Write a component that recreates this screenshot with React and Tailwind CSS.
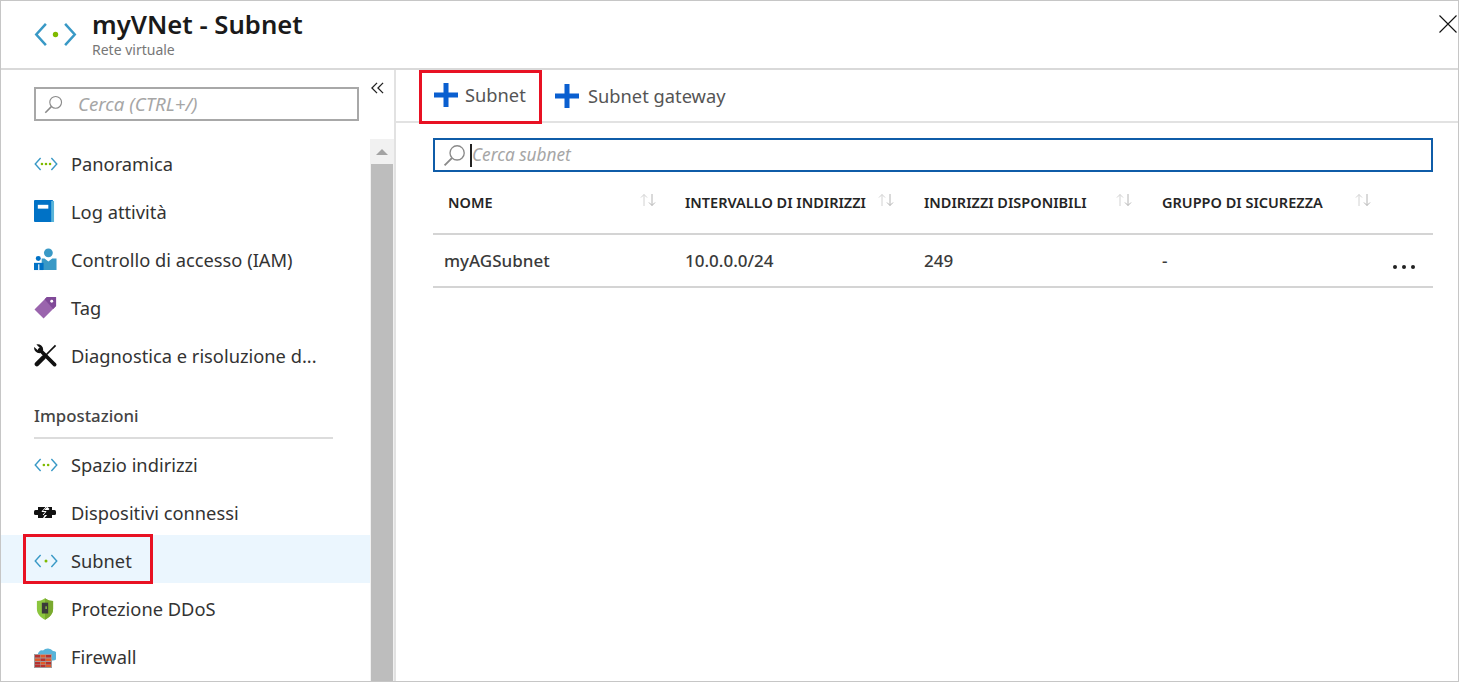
const VNetIcon = ({ dots = 1, className }) => (
  <svg viewBox="0 0 44 26" className={className} fill="none">
    <path d="M12 2 L2 13 L12 24" stroke="#3999c6" strokeWidth="2.6" />
    <path d="M32 2 L42 13 L32 24" stroke="#3999c6" strokeWidth="2.6" />
    {dots === 1 && <circle cx="22" cy="13" r="2.8" fill="#7fba00" />}
    {dots === 2 && (
      <>
        <circle cx="18" cy="13" r="2.4" fill="#7fba00" />
        <circle cx="26" cy="13" r="2.4" fill="#7fba00" />
      </>
    )}
    {dots === 3 && (
      <>
        <circle cx="14.5" cy="13" r="2.4" fill="#7fba00" />
        <circle cx="22" cy="13" r="2.4" fill="#7fba00" />
        <circle cx="29.5" cy="13" r="2.4" fill="#7fba00" />
      </>
    )}
  </svg>
);

const BookIcon = () => (
  <svg viewBox="0 0 22 24" className="w-[21px] h-[23px]">
    <rect x="0" y="0" width="20" height="23" rx="1" fill="#0072c6" />
    <rect x="18" y="1" width="3" height="22" fill="#59b4d9" />
    <rect x="4" y="5" width="11" height="4" fill="#fff" />
  </svg>
);

const PeopleIcon = () => (
  <svg viewBox="0 0 24 24" className="w-[23px] h-[23px]">
    <circle cx="15" cy="5" r="4.6" fill="#3999c6" />
    <path d="M8 23 V11 H11 L15 14 L19 11 H23.5 V23 Z" fill="#3999c6" />
    <circle cx="4.5" cy="11" r="2.6" fill="#0072c6" />
    <path d="M0 23 V15.5 H10 V23 Z" fill="#0072c6" />
    <rect x="4.4" y="17" width="1.2" height="6" fill="#fff" />
  </svg>
);

const TagIcon = () => (
  <svg viewBox="0 0 24 24" className="w-[23px] h-[23px]">
    <path d="M0.5 14 L13.5 1 L23 1 L23 10.5 L10 23.5 Z" fill="#9a64ad" />
    <path d="M11 3.5 L13.5 1 L23 1 L23 10.5 L20 13.5 Z" fill="#804998" />
    <circle cx="18.5" cy="5.5" r="1.5" fill="#fff" />
  </svg>
);

const ToolsIcon = () => (
  <svg viewBox="0 0 24 24" className="w-[23px] h-[23px]">
    <path d="M6 6 L21.5 21.5" stroke="#111" strokeWidth="3.8" strokeLinecap="round" />
    <path d="M9.5 6.5 A5.6 5.6 0 0 0 2.5 0.5 L6 4 L4 6.5 L0.2 3 A5.6 5.6 0 0 0 6.5 9.5 Z" fill="#111" />
    <path d="M22.5 1.5 L12 12" stroke="#111" strokeWidth="1.8" />
    <path d="M10 14 L3 21" stroke="#111" strokeWidth="4.6" strokeLinecap="round" />
  </svg>
);

const PlugIcon = () => (
  <svg viewBox="0 0 22 13" className="w-[22px] h-[13px]">
    <rect x="0" y="4" width="22" height="5" rx="1.5" fill="#111" />
    <path d="M4 1 H13 L9 5.5 H13 L9 12 H4 Z" fill="#111" />
    <path d="M18 1 H13.5 L15.5 3 L11 8 H14 L10.5 12 H18 Z" fill="#111" />
    <path d="M12.5 0.5 L8 5.5 H12 L9 9" stroke="#fff" strokeWidth="1" fill="none" />
  </svg>
);

const ShieldIcon = () => (
  <svg viewBox="0 0 20 24" className="w-[18px] h-[22px] ml-[2px]">
    <path d="M10 0 C13 2.5 16 3 19 3 V12 C19 18 14 22 10 24 C6 22 1 18 1 12 V3 C4 3 7 2.5 10 0 Z" fill="#8cc63f" />
    <path d="M10 0 C13 2.5 16 3 19 3 V12 C19 18 14 22 10 24 Z" fill="#7aa92f" />
    <rect x="6.5" y="5" width="7" height="12" fill="#3a3a3a" />
    <rect x="10.5" y="9" width="1.5" height="3" fill="#8cc63f" />
  </svg>
);

const FirewallIcon = () => (
  <svg viewBox="0 0 22 23" className="w-[22px] h-[23px]">
    <path d="M4 10 A4 4 0 0 1 9 5.5 A6.5 6.5 0 0 1 19 6 A4.4 4.4 0 0 1 19 15.5 H4 Z" fill="#59b4d9" />
    <rect x="0" y="9" width="18" height="14" fill="#a39a9a" />
    <g fill="#b8312f">
      <rect x="1" y="10" width="5" height="2.5" />
      <rect x="12" y="10" width="5" height="2.5" />
      <rect x="6.5" y="13.5" width="5" height="2.5" />
      <rect x="1" y="17" width="5" height="2.5" />
      <rect x="12" y="17" width="5" height="2.5" />
      <rect x="1" y="20" width="5" height="2" />
      <rect x="6.5" y="20" width="5" height="2" />
    </g>
    <g fill="#e25a28">
      <rect x="6.5" y="10" width="5" height="2.5" />
      <rect x="1" y="13.5" width="5" height="2.5" />
      <rect x="12" y="13.5" width="5" height="2.5" />
      <rect x="6.5" y="17" width="5" height="2.5" />
      <rect x="12" y="20" width="5" height="2" />
    </g>
  </svg>
);

const SearchIcon = ({ className }) => (
  <svg viewBox="0 0 22 22" className={className} fill="none" stroke="#8a8a8a" strokeWidth="1.3">
    <circle cx="13.5" cy="8.5" r="6.8" />
    <path d="M8.5 13.5 L1.5 20.5" strokeWidth="1.8" />
  </svg>
);

const SortIcon = () => (
  <svg viewBox="0 0 16 14" className="w-4 h-3.5 shrink-0" fill="none" strokeWidth="1">
    <path d="M4 13 V1.5 M1 4.5 L4 1.5 L7 4.5" stroke="#d2d2d2" />
    <path d="M12 1 V12.5 M9 9.5 L12 12.5 L15 9.5" stroke="#b4b4b4" />
  </svg>
);

const PlusIcon = () => (
  <svg viewBox="0 0 24 24" className="w-6 h-6 shrink-0">
    <path d="M9.5 0 H14.5 V9.5 H24 V14.5 H14.5 V24 H9.5 V14.5 H0 V9.5 H9.5 Z" fill="#0a5fd0" />
  </svg>
);

const NavItem = ({ icon, label, active }) => (
  <div className={`flex items-center h-12 pt-[3px] pl-[33px] ${active ? "bg-[#ebf6fe]" : ""}`}>
    <span className="w-[37px] flex items-center shrink-0">{icon}</span>
    <span className="text-[18.3px] text-[#333]">{label}</span>
  </div>
);

const TOP_ITEMS = [
  { label: "Panoramica", icon: <VNetIcon dots={3} className="w-6 h-[14px]" /> },
  { label: "Log attività", icon: <BookIcon /> },
  { label: "Controllo di accesso (IAM)", icon: <PeopleIcon /> },
  { label: "Tag", icon: <TagIcon /> },
  { label: "Diagnostica e risoluzione d...", icon: <ToolsIcon /> },
];

const SETTINGS_ITEMS = [
  { label: "Spazio indirizzi", icon: <VNetIcon dots={2} className="w-6 h-[14px]" /> },
  { label: "Dispositivi connessi", icon: <PlugIcon /> },
  { label: "Subnet", icon: <VNetIcon className="w-6 h-[14px]" />, active: true },
  { label: "Protezione DDoS", icon: <ShieldIcon /> },
  { label: "Firewall", icon: <FirewallIcon /> },
];

const COLUMNS = [
  { label: "NOME", textWidth: "w-[196px] pl-1", col: "w-[241px]" },
  { label: "INTERVALLO DI INDIRIZZI", textWidth: "w-[193px]", col: "w-[239px]" },
  { label: "INDIRIZZI DISPONIBILI", textWidth: "w-[192px]", col: "w-[238px]" },
  { label: "GRUPPO DI SICUREZZA", textWidth: "w-[193px]", col: "flex-1" },
];

export default function App() {
  return (
    <div className="relative w-[1459px] h-[682px] bg-white border border-[#c6c6c6] overflow-hidden font-['Noto_Sans',sans-serif] text-[#333]">
      {/* Header */}
      <div className="flex items-center h-[69px] border-b-2 border-[#d9d9d9]">
        <VNetIcon className="w-[43px] h-[25px] ml-[33px] mr-[15px] shrink-0" />
        <div className="flex flex-col self-start mt-[7px]">
          <span className="text-[25.7px] leading-[34px] font-semibold text-[#1a1a1a]">myVNet - Subnet</span>
          <span className="text-[14px] leading-[18px] mt-[-1px] text-[#777]">Rete virtuale</span>
        </div>
        <svg viewBox="0 0 18 18" className="w-[18px] h-[18px] ml-auto mr-[1px] self-start mt-[14px]" stroke="#111" strokeWidth="1.1">
          <path d="M0.5 0.5 L17.5 17.5 M17.5 0.5 L0.5 17.5" />
        </svg>
      </div>

      <div className="flex h-[611px]">
        {/* Sidebar */}
        <div className="flex w-[395px] shrink-0 border-r-2 border-[#e2e2e2]">
          <div className="w-[369px] shrink-0">
            <div className="flex items-start h-[68px]">
              <div className="flex items-center shrink-0 w-[325px] h-[34px] ml-[33px] mt-[17px] border-2 border-[#a8a8a8] pl-2">
                <SearchIcon className="w-[19px] h-[19px] mr-[15px]" />
                <span className="text-[18.7px] italic text-[#a6a6a6]">Cerca (CTRL+/)</span>
              </div>
              <svg viewBox="0 0 14 12" className="w-[13px] h-[12px] shrink-0 ml-[12px] mt-[12px]" fill="none" stroke="#222" strokeWidth="1.4">
                <path d="M6.5 0.5 L1 6 L6.5 11.5 M13 0.5 L7.5 6 L13 11.5" />
              </svg>
            </div>
            {TOP_ITEMS.map((item) => (
              <NavItem key={item.label} {...item} />
            ))}
            <div className="ml-[33px] mr-[37px] h-[62px] flex items-end border-b-2 border-[#dcdcdc] mt-[-1px] pb-[9px]">
              <span className="text-[16.8px] font-medium text-[#444]">Impostazioni</span>
            </div>
            {SETTINGS_ITEMS.map((item) => (
              <NavItem key={item.label} {...item} />
            ))}
          </div>
          {/* Scrollbar */}
          <div className="flex flex-col w-[24px] mt-[69px] bg-[#f1f1f1]">
            <div className="flex items-center justify-center h-[25px]">
              <div className="w-0 h-0 border-x-[6px] border-x-transparent border-b-[6px] border-b-[#a3a3a3]" />
            </div>
            <div className="flex-1 mx-[1px] bg-[#bdbdbd]" />
          </div>
        </div>

        {/* Main */}
        <div className="flex-1">
          <div className="flex items-center h-[53px] border-b-2 border-[#e2e2e2] pl-[23px]">
            <div className="flex items-center h-[54px] w-[123px] mt-[3px] pb-[4px] pl-[12px] border-[3px] border-[#e81123] mr-[13px] relative">
              <PlusIcon />
              <span className="ml-[7px] text-[18.3px] text-[#555]">Subnet</span>
            </div>
            <PlusIcon />
            <span className="ml-[9px] text-[18.3px] text-[#555]">Subnet gateway</span>
          </div>
          <div className="pl-[37px] pr-[25px]">
            <div className="flex items-center h-[34px] mt-[15px] border-2 border-[#0f5ca8] pl-2">
              <SearchIcon className="w-[23px] h-[23px]" />
              <span className="w-[2px] h-[23px] bg-[#222] ml-[4px]" />
              <span className="text-[17.2px] italic text-[#a6a6a6]">Cerca subnet</span>
            </div>
            <div className="flex h-[63px] items-center pl-[11px] border-b-2 border-[#d4d4d4]">
              {COLUMNS.map((c) => (
                <div key={c.label} className={`flex items-center ${c.col}`}>
                  <span className={`${c.textWidth} shrink-0 text-[14.5px] font-semibold text-[#252525] whitespace-nowrap`}>
                    {c.label}
                  </span>
                  <span className="mb-[5px]"><SortIcon /></span>
                </div>
              ))}
            </div>
            <div className="flex h-[53px] items-center pl-[11px] border-b-2 border-[#d4d4d4] text-[17px] font-medium text-[#3a3a3a]">
              <span className="w-[241px]">myAGSubnet</span>
              <span className="w-[239px]">10.0.0.0/24</span>
              <span className="w-[238px]">249</span>
              <span>-</span>
              <span className="ml-auto mr-[18px] mt-[12px] flex gap-[5px]">
                <i className="block w-1 h-1 rounded-full bg-[#222]" />
                <i className="block w-1 h-1 rounded-full bg-[#222]" />
                <i className="block w-1 h-1 rounded-full bg-[#222]" />
              </span>
            </div>
          </div>
        </div>
      </div>

      {/* Red highlight over the Subnet menu row */}
      <div className="absolute left-[22px] top-[533px] w-[130px] h-[50px] border-[3px] border-[#e81123]" />
    </div>
  );
}
